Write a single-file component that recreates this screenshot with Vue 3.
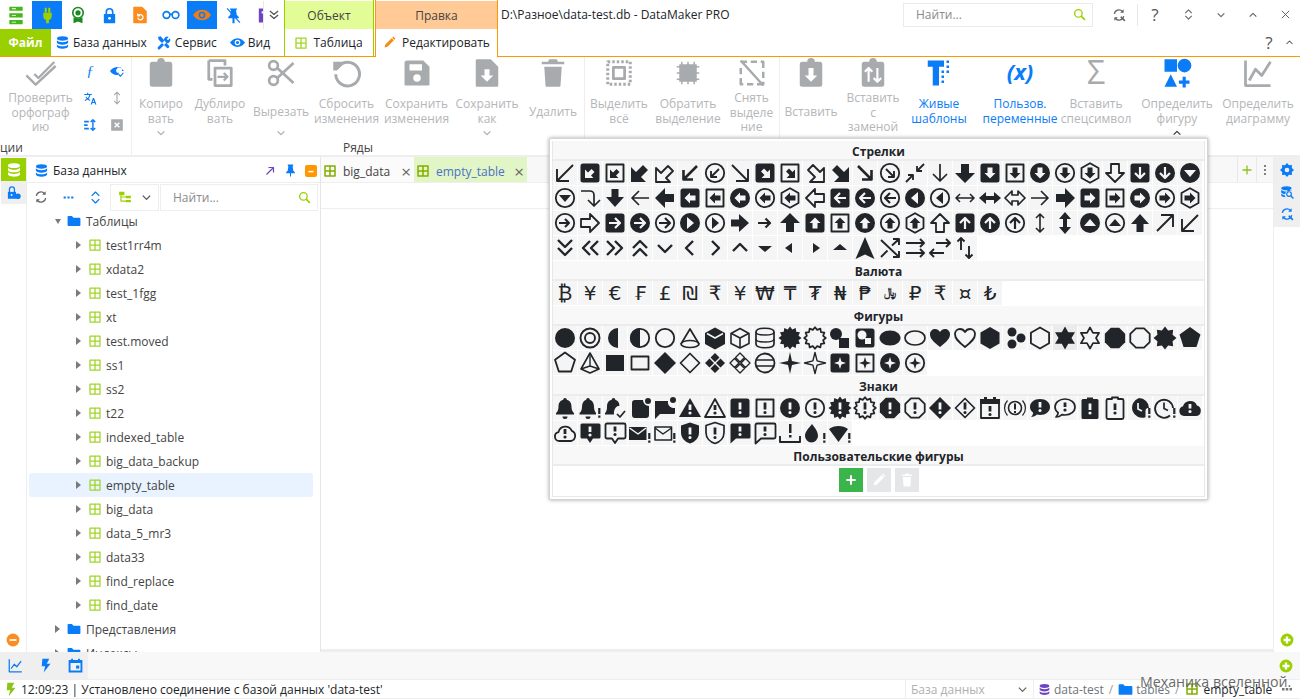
<script setup>
import { h } from 'vue'

const dark = '#212529'
const hole = '#f5f5f5'
const F = (d, f = dark) => ({ d, f })
const S = (d, w = 2, s = dark) => ({ d, s, w })
const rot = (parts, deg) => parts.map((p) => ({ ...p, r: deg }))
const c = (x, y, r) => `M${x - r} ${y}a${r} ${r} 0 1 0 ${2 * r} 0a${r} ${r} 0 1 0 ${-2 * r} 0Z`
const poly = (n, R, start = -90, x = 12, y = 12) => {
  let d = ''
  for (let i = 0; i < n; i++) {
    const a = ((start + (360 / n) * i) * Math.PI) / 180
    d += `${i ? 'L' : 'M'}${(x + R * Math.cos(a)).toFixed(2)} ${(y + R * Math.sin(a)).toFixed(2)}`
  }
  return d + 'Z'
}
const star = (n, R, r, start = -90, x = 12, y = 12) => {
  let d = ''
  for (let i = 0; i < n * 2; i++) {
    const a = ((start + (180 / n) * i) * Math.PI) / 180
    const q = i % 2 ? r : R
    d += `${i ? 'L' : 'M'}${(x + q * Math.cos(a)).toFixed(2)} ${(y + q * Math.sin(a)).toFixed(2)}`
  }
  return d + 'Z'
}

// Ico draws a list of paths, the popup and the toolbars all go through it
const Ico = (p) =>
  h(
    'svg',
    { width: p.size || 24, height: p.size || 24, viewBox: '0 0 24 24', style: 'display:block;flex:none' },
    p.parts.map((q) =>
      h('path', {
        d: q.d,
        fill: q.f || 'none',
        stroke: q.s || 'none',
        'stroke-width': q.w || 0,
        'stroke-dasharray': q.da,
        'stroke-linejoin': 'round',
        transform: q.r ? `rotate(${q.r} 12 12)` : undefined,
      }),
    ),
  )
Ico.props = ['parts', 'size']

// frames
const sqF = [F('M5 2.5h14a2.5 2.5 0 0 1 2.5 2.5v14a2.5 2.5 0 0 1-2.5 2.5H5A2.5 2.5 0 0 1 2.5 19V5A2.5 2.5 0 0 1 5 2.5Z')]
const sqO = [S('M3.5 3.5h17v17h-17Z', 1.9)]
const cF = [F(c(12, 12, 10))]
const cO = [S(c(12, 12, 9.2), 1.8)]
const hexO = [S('M12 2.2 20.5 7v10L12 21.8 3.5 17V7Z', 1.8)]

// straight arrows, written pointing up
const thin = (d) => rot([S('M12 21V4M5 11l7-7 7 7', 1.7)], d)
const thick = (d) => rot([F('M12 2 22 12h-6v9H8V12H2Z')], d)
const medium = (d) => rot([F('M12 3 21 13h-5.5v8h-7v-8H3Z')], d)
const hollow = (d) => rot([S('M12 3 21 12h-5v9H8v-9H3Z', 1.8)], d)
const blockIn = (d, f) => rot([F('M12 6.5 17.5 12H14.5v5.5h-5V12H6.5Z', f)], d)
const thinIn = (d, s) => rot([S('M12 18V7M7 12l5-5 5 5', 2.2, s)], d)
const caretIn = (d, f) => rot([F('M12 8 18 15H6Z', f)], d)

const dirSet = (d) => ({
  thin: thin(d),
  thick: thick(d),
  sqFb: [...sqF, ...blockIn(d, hole)],
  sqOb: [...sqO, ...blockIn(d, dark)],
  cFb: [...cF, ...blockIn(d, hole)],
  cOb: [...cO, ...blockIn(d, dark)],
  hexb: [...hexO, ...blockIn(d, dark)],
  hollow: hollow(d),
  sqFt: [...sqF, ...thinIn(d, hole)],
  cFt: [...cF, ...thinIn(d, hole)],
  cOt: [...cO, ...thinIn(d, dark)],
  cFc: [...cF, ...caretIn(d, hole)],
  cOc: [...cO, ...caretIn(d, dark)],
})
const up = dirSet(0)
const right = dirSet(90)
const down = dirSet(180)
const left = dirSet(270)
const small = rot([S('M12 19V7M7.5 11.5 12 7l4.5 4.5', 2.2)], 90)

// diagonals, written pointing up-right
const dThin = (d) => rot([S('M4 20 20 4M8 4h12v12', 1.9)], d)
const dThick = (d) => rot([F('M6 3h15v15l-5-5-7 7-5-5 7-7Z')], d)
const dHollow = (d) => rot([S('M7 3h14v14l-5-5-7 7-5-5 7-7Z', 1.8)], d)
const dMed = (d) => rot([S('M5 19 18 6M9 5.5h9.5V15', 2.6)], d)
const dIn = (d, f) => rot([F('M8.5 7H17v8.5l-3-3-3.5 3.5-3-3L11 9.5Z', f)], d)
const dCirc = (d) => [...cO, ...rot([S('M8 16 16 8M10 8h6v6', 1.9)], d)]

const lrThin = [S('M3 12h18M7 8l-4 4 4 4M17 8l4 4-4 4', 1.6)]
const lrThick = [F('M1 12 8 6v4h8V6l7 6-7 6v-4H8v4Z')]
const lrHollow = [S('M2 12 9 5v4h6V5l7 7-7 7v-4H9v4Z', 1.7)]
const udThin = rot(lrThin, 90)
const udThick = rot(lrThick, 90)

const chev = (d) => rot([S('M5 9l7 7 7-7', 2.4)], d)
const chev2 = (d) => rot([S('M5 4l7 7 7-7M5 12l7 7 7-7', 2.4)], d)
const caretS = (d) => rot([F('M12 16 5 10h14Z')], d)
const caretN = (d) => rot([F('M12 17 7 10h10Z')], d)

const arrows = [
  dThin(180), [...sqF, ...dIn(180, hole)], [...sqO, ...dIn(180, dark)], dThick(180), dHollow(180), dMed(180), dCirc(180),
  dThin(90), [...sqF, ...dIn(90, hole)], [...sqO, ...dIn(90, dark)], dHollow(90), dThick(90), dMed(90), dCirc(90),
  [S('M14 10l7-7M14 5v5h5M10 14l-7 7M10 19v-5H5', 1.8)],
  down.thin, down.thick, down.sqFb, down.sqOb, down.cFb, down.cOb, down.hexb, down.hollow, down.sqFt, down.cFt, down.cFc,

  down.cOc, [S('M3 5h9a4 4 0 0 1 4 4v11M10 14l6 6 6-6', 1.7)], medium(180),
  left.thin, left.thick, left.sqFb, left.sqOb, left.cFb, left.cOb, left.hexb, left.hollow, left.sqFt, left.cFt, left.cOt, left.cFc, left.cOc,
  lrThin, lrThick, lrHollow,
  right.thin, right.thick, right.sqFb, right.sqOb, right.cFb, right.cOb, right.hexb,

  [...cO, ...rot([S('M12 18V8M8 12l4-4 4 4', 2.1)], 90)], right.hollow, right.sqFt, right.cFt, right.cOt, right.cFc, right.cOc, medium(90), small,
  up.thick, up.sqFb, up.sqOb, up.cFb, up.cOb, up.hexb, up.hollow, up.sqFt, up.cFt, up.cOt,
  udThin, udThick, up.cFc, up.cOc, medium(0), dThin(0), dThin(180),

  chev2(0), chev2(90), chev2(270), chev2(180), chev(0), chev(90), chev(270), chev(180),
  caretS(0), caretN(90), caretN(270), caretS(180),
  [F('M12 1 21.5 23 12 18.5 2.5 23Z')],
  [S('M3 4 21 21M3 21l6.5-6.5M14 9.5 21 3M15 3h6v6M15 21h6v-6', 1.9)],
  [S('M3 7h18M17 3l4 4-4 4M3 17h18M17 13l4 4-4 4', 1.9)],
  [S('M8 7h14M18 3l4 4-4 4M16 17H2M6 13l-4 4 4 4', 1.9)],
  [S('M8 14V2M4.5 5.5 8 2l3.5 3.5M16 10v12M12.5 18.5 16 22l3.5-3.5', 1.9)],
]

const currency = ['₿', '¥', '€', '₣', '£', '₪', '₹', '¥', '₩', '₸', '₮', '₦', '₱', '﷼', '₽', '₹', '¤', '₺']

const spark = (R = 10, r = 2.6) => star(4, R, r)
const heart = 'M12 21C5 15.5 2 12.5 2 8.3 2 5 4.5 3 7 3c2 0 3.8 1 5 3 1.2-2 3-3 5-3 2.5 0 5 2 5 5.3 0 4.2-3 7.2-10 12.7Z'
const dia4 = 'M12 2 16.5 6.5 12 11 7.5 6.5ZM12 13 16.5 17.5 12 22 7.5 17.5ZM6.5 7.5 11 12 6.5 16.5 2 12ZM17.5 7.5 22 12 17.5 16.5 13 12Z'

const shapes = [
  cF, [S(c(12, 12, 9.5), 1.9), S(c(12, 12, 5), 1.9)], [F('M15 2a10 10 0 0 0 0 20Z')], [...cO, F('M12 2a10 10 0 0 0 0 20Z')], cO,
  [S('M12 3 3 18a9 3.5 0 0 0 18 0Z', 1.7), S('M3 18a9 3.5 0 0 1 18 0', 1.3)],
  [F('M12 1.5 22 7v11l-10 5.5L2 18V7Z'), S('M4 7.5 12 12l8-4.5', 1.5, hole)],
  [S('M12 2.5 21 7.5v10L12 22l-9-4.5v-10Z', 1.6), S('M3.5 7.5 12 12l8.5-4.5M12 12v10', 1.6)],
  [S('M3 6c0-5 18-5 18 0v12c0 5-18 5-18 0Z', 1.7), S('M3 6c0 4 18 4 18 0M3 13c0 4 18 4 18 0', 1.4)],
  [F(star(12, 11.5, 8.8))], [S(star(12, 10.8, 8.4), 1.7)],
  [F(c(8, 8, 6)), F('M11 12h10v10H11Z')],
  [...sqF, F(c(9, 9, 4.5), hole), F('M12 12h6v6h-6Z', hole)],
  [F('M12 4.5C6 4.5 1.5 8 1.5 12s4.5 7.5 10.5 7.5S22.5 16 22.5 12 18 4.5 12 4.5Z')],
  [S('M12 5C6 5 2 8 2 12s4 7 10 7 10-3 10-7-4-7-10-7Z', 1.7)],
  [F(heart)], [S(heart, 1.8)],
  [F(poly(6, 11))], [F(c(9, 6, 4.5)), F(c(9, 18, 4.5)), F(c(18, 12, 4.5))], [S(poly(6, 10.5), 1.8)],
  [F(star(6, 11.5, 6.5))], [S(star(6, 10.5, 6), 1.7)],
  [F(poly(8, 11, -67.5))], [S(poly(8, 10.5, -67.5), 1.8)], [F(star(8, 11.5, 8.2))], [F(poly(5, 11))],

  [S(poly(5, 10.5), 1.8)],
  [S('M12 2 3 18l9 4 9-4Z', 1.6), S('M12 2v13M3 18l9-3 9 3', 1.4)],
  [F('M3 4h18v16H3Z')], [S('M3.5 5.5h17v13h-17Z', 1.8)],
  [F('M12 1 23 12 12 23 1 12Z')], [S('M12 2.5 21.5 12 12 21.5 2.5 12Z', 1.7)],
  [F(dia4)], [S(dia4, 1.3)],
  [S(c(12, 12, 9.5), 1.8), S('M3 9h18M3 15h18', 1.6)],
  [F(spark(11, 2.8))], [S(spark(10.5, 3), 1.4)],
  [...sqF, F(spark(6, 2), hole)], [...sqO, F(spark(6, 2))],
  [...cF, F(spark(6, 2), hole)], [...cO, F(spark(6, 2))],
]

const bang = (f, x = 12, t = 6.5, b = 13.5) => F(`M${x - 1.4} ${t}h2.8v${b - t}h-2.8Z${c(x, b + 3, 1.6)}`, f)
const sideBang = F('M20.2 12h2.2v6h-2.2ZM20.2 19.5h2.2v2.2h-2.2Z')
const bell = 'M12 2a1.8 1.8 0 0 1 1.8 1.8c3.5 1 4.7 3.6 4.7 7.2 0 3.5 1.5 5 2.5 6v1.5H3V17c1-1 2.5-2.5 2.5-6 0-3.6 1.2-6.2 4.7-7.2A1.8 1.8 0 0 1 12 2ZM9.5 20.5h5a2.5 2.5 0 0 1-5 0Z'
const bellN = 'M10 2a1.8 1.8 0 0 1 1.8 1.8c3 1 4.2 3.6 4.2 7.2 0 3.5 1.5 5 2 6v1.5H1.5V17c1-1 2.5-2.5 2.5-6 0-3.6 1.2-6.2 4.2-7.2A1.8 1.8 0 0 1 10 2ZM7.5 20.5h5a2.5 2.5 0 0 1-5 0Z'
const clip = 'M9 3V1.5h6V3h4a1.5 1.5 0 0 1 1.5 1.5v17A1.5 1.5 0 0 1 19 23H5a1.5 1.5 0 0 1-1.5-1.5v-17A1.5 1.5 0 0 1 5 3Z'
const cloud = 'M6.5 20a4.5 4.5 0 0 1-1-8.9 7 7 0 0 1 13.3-1.2A5.3 5.3 0 0 1 18 20Z'
const shield = 'M12 1.5 21 4.5v7c0 5.5-4 9.5-9 11-5-1.5-9-5.5-9-11v-7Z'
const msg = 'M4 2.5h17a1.5 1.5 0 0 1 1.5 1.5v12a1.5 1.5 0 0 1-1.5 1.5H8l-5.5 5V4A1.5 1.5 0 0 1 4 2.5Z'
const msgC = 'M4 2.5h17a1.5 1.5 0 0 1 1.5 1.5v12a1.5 1.5 0 0 1-1.5 1.5h-6l-3 4.5-3-4.5H4A1.5 1.5 0 0 1 2.5 16V4A1.5 1.5 0 0 1 4 2.5Z'
const bub = 'M12 3c5.8 0 10 3.5 10 8s-4.2 8-10 8c-1 0-2-.1-3-.4-1.5 1.3-3.5 2.4-6 2.4 1-1 2-2.5 2.2-4.3C3.2 15.3 2 13.3 2 11c0-4.5 4.2-8 10-8Z'

const signs = [
  [F(bell)], [F(bellN), sideBang],
  [F('M10.5 2a1.8 1.8 0 0 1 1.8 1.8c3 1 4 3 4.2 6-3 0-6 3-5.5 8.7H2V17c1-1 2-2.5 2-6 0-3.6 1-6.2 4.7-7.2A1.8 1.8 0 0 1 10.5 2Z'), S('M14 18l3 3 5-6', 1.7)],
  [F('M4 7a3 3 0 0 1 3-3h8a6 6 0 0 0 6 6v9a3 3 0 0 1-3 3H7a3 3 0 0 1-3-3Z'), F(c(20, 5, 3))],
  [F('M2 5h13a6 6 0 0 0 7 7v5a1 1 0 0 1-1 1H7l-5 5Z'), F(c(20, 4, 3))],
  [F('M12 2 23 21H1Z'), bang(hole, 12, 8.5, 14)], [S('M12 3 22 21H2Z', 1.8), bang(dark, 12, 9, 14)],
  [...sqF, bang(hole)], [...sqO, bang(dark)], [...cF, bang(hole)], [...cO, bang(dark)],
  [F(star(12, 11.5, 8.8)), bang(hole)], [S(star(12, 10.8, 8.4), 1.7), bang(dark)],

  [F(poly(8, 11, -67.5)), bang(hole)], [S(poly(8, 10.5, -67.5), 1.8), bang(dark)],
  [F('M12 1 23 12 12 23 1 12Z'), bang(hole)], [S('M12 2.5 21.5 12 12 21.5 2.5 12Z', 1.7), bang(dark)],
  [F('M6 1h3v2h6V1h3v2h4v5H2V3h4Z'), S('M3 6h18v16H3Z', 1.8), bang(dark, 12, 10, 15.5)],
  [S(c(12, 12, 6.5), 1.6), S('M4.5 4.5a11 11 0 0 0 0 15M19.5 4.5a11 11 0 0 1 0 15', 1.2), F('M11 7.5h2v6h-2ZM11 15h2v2h-2Z')],
  [F(bub), bang(hole, 12, 6, 11.5)], [S(bub, 1.7), bang(dark, 12, 6.5, 11)],
  [F(clip), bang(hole, 12, 7.5, 14)], [S(clip, 1.8), bang(dark, 12, 7.5, 14)],
  [F('M11 2a10 10 0 0 1 10 10h-1.5a3 3 0 0 0-2 3v6.3A10 10 0 1 1 11 2Z'), S('M10 7v6l4 2', 1.7, hole), sideBang],
  [S('M17 19.5A9 9 0 1 1 20 12', 1.8), S('M11 6.5v6l4 2', 1.7), sideBang],
  [F('M6 20a5 5 0 0 1-1-9.8 7.5 7.5 0 0 1 14-.8A5.5 5.5 0 0 1 18.5 20Z'), bang(hole, 12, 8, 12.5)],

  [S(cloud, 1.8), bang(dark, 12, 8, 13)],
  [F(msgC), bang(hole, 12, 5.5, 11)], [S(msgC, 1.8), bang(dark, 12, 5.5, 10.5)],
  [F('M1 6h17.5v13H1Z'), S('M1.5 7 10 13l8-6', 1.5, hole), sideBang],
  [S('M2 6h16.5v13H2Z', 1.6), S('M2 7l8 6 8.5-6', 1.5), sideBang],
  [F(shield), bang(hole)], [S(shield, 1.7), bang(dark)],
  [F(msg), bang(hole, 12, 5.5, 10.5)], [S(msg, 1.8), bang(dark, 12, 5.5, 10.5)],
  [S('M2 15v6h20v-6', 1.9), F('M11 3h2.5v9H11ZM11 14h2.5v2.5H11Z')],
  [F('M9 3c3 4 6 7.5 6 12a6.5 6.5 0 0 1-13 0c0-4.5 4-8 7-12Z'), sideBang],
  [F('M1 8c5-4 14-4 19 0l-9.5 13Z'), sideBang],
]

const gridIco = (col, w = 2.5) => [
  { d: 'M2 2h20v20H2Z', s: col, w },
  { d: 'M2 12h20M12 2v20', s: col, w },
]
const db = (col) => [F('M12 2c-5 0-9 1.3-9 3.5S7 9 12 9s9-1.3 9-3.5S17 2 12 2ZM3 8.5c1.5 2 5 3 9 3s7.5-1 9-3V12c0 2-4 3.5-9 3.5S3 14 3 12ZM3 15c1.5 2 5 3 9 3s7.5-1 9-3v3.5c0 2-4 3.5-9 3.5s-9-1.5-9-3.5Z', col)]
const folder = (col) => [F('M1 5a1.5 1.5 0 0 1 1.5-1.5h6l2.5 3h10.5A1.5 1.5 0 0 1 23 8v11a1.5 1.5 0 0 1-1.5 1.5h-19A1.5 1.5 0 0 1 1 19Z', col)]
const plusCircle = (col) => [F(c(12, 12, 11), col), F('M10 6h4v4h4v4h-4v4h-4v-4H6v-4h4Z', '#fff')]

const blue = '#0a7cf7'
const lime = '#9bd000'
const gray = '#a8abae'

const quick = [
  { parts: [F('M8 1h3v7H8ZM13 1h3v7h-3Z', lime), F('M6 8h12v5a6 6 0 0 1-4 5.5V23h-4v-4.5A6 6 0 0 1 6 13Z', lime)], active: true, size: 17 },
  { parts: [S(c(12, 9, 7), 2.2, '#198a1e'), F(c(12, 9, 3.5), '#198a1e'), F('M6 15v8l6-2.5 6 2.5v-8c-3.5 2-8.5 2-12 0Z', '#198a1e')], size: 18 },
  { parts: [F('M4 10h16v12a1 1 0 0 1-1 1H5a1 1 0 0 1-1-1Z', blue), S('M7.5 10V7a4.5 4.5 0 0 1 9 0v3', 2.3, blue), F(c(12, 16, 2), '#fff')], size: 17 },
  { parts: [F('M4 1h11l6 6v15a1 1 0 0 1-1 1H4a1 1 0 0 1-1-1V2a1 1 0 0 1 1-1Z', '#fb8c1e'), S('M9 15.5a3.5 3.5 0 1 0 1-3M9 10v3h3', 1.7, '#fff')], size: 18 },
  { parts: [S(c(6, 12, 4.5), 2.2, blue), S(c(18, 12, 4.5), 2.2, blue), S('M10.5 11h3', 2.2, blue)], size: 18 },
  { parts: [F('M12 5C6 5 2 9 0 12c2 3 6 7 12 7s10-4 12-7c-2-3-6-7-12-7Z', '#ee7d12'), F(c(12, 12, 4.5), blue), F(c(12, 12, 2.5), '#ee7d12')], active: true, size: 18 },
  { parts: [F('M7 2h10v2h-1.5l1 7 3 3v2h-6v7h-3v-7h-6v-2l3-3 1-7H7Z', blue), S('M3 2 21 22', 1.8, blue)], size: 17 },
  { parts: [F('M4 2h14v7h-5v13H4Z', '#6f42c1'), F('M8 6h6v3H8Z', '#fff')], size: 17 },
]

const rbn = {
  check: [S('M1 13l7 7L23 6', 1.8, gray), S('M7 12l3 3L22 3', 1.8, gray)],
  clipboard: [F('M9 3a3 3 0 0 1 6 0h4a2 2 0 0 1 2 2v16a2 2 0 0 1-2 2H5a2 2 0 0 1-2-2V5a2 2 0 0 1 2-2Z', gray)],
  dup: [S('M3 2h13v4M8 8h13v14H8ZM3 2v15h3', 2.2, gray), S('M10 15h8M15 12l3 3-3 3', 1.8, gray)],
  cut: [S(c(6, 6, 3.5), 2.2, gray), S(c(6, 18, 3.5), 2.2, gray), S('M9 8 22 20M9 16 22 4', 2.2, gray)],
  undo: [S('M5 7A9.5 9.5 0 1 1 3 13', 2.4, gray), F('M1 3h8v2L4 10H1Z', gray)],
  save: [F('M4 2h13l5 5v14a1 1 0 0 1-1 1H3a1 1 0 0 1-1-1V4a2 2 0 0 1 2-2Z', gray), F('M6 5h10v5H6Z', '#fff'), F(c(12, 16, 3), '#fff')],
  saveas: [F('M4 1h11l6 6v15a1 1 0 0 1-1 1H4a1 1 0 0 1-1-1V2a1 1 0 0 1 1-1Z', gray), F('M10 9h4v5h3l-5 5-5-5h3Z', '#fff')],
  trash: [F('M9 1h6l1 2h5v2H3V3h5ZM5 7h14l-1 15a1 1 0 0 1-1 1H7a1 1 0 0 1-1-1Z', gray)],
  selall: [{ d: 'M3 3h18v18H3Z', s: gray, w: 2.4, da: '2 1.6' }, S('M7.5 7.5h9v9h-9Z', 2.2, gray)],
  invert: [F('M5 5h14v14H5Z', gray), S('M3 7h18M3 12h18M3 17h18M7 3v18M12 3v18M17 3v18', 1.2, gray)],
  unsel: [S('M3 3h5M11 3h5M19 3h2v5M21 11v5M21 19v2h-5M13 21H8M5 21H3v-5M3 13V8', 2, gray), S('M3 2 21 22', 2, gray)],
  paste: [F('M9 3a3 3 0 0 1 6 0h4a2 2 0 0 1 2 2v16a2 2 0 0 1-2 2H5a2 2 0 0 1-2-2V5a2 2 0 0 1 2-2Z', gray), F('M10 8h4v6h3l-5 5-5-5h3Z', '#fff')],
  pastex: [F('M9 3a3 3 0 0 1 6 0h4a2 2 0 0 1 2 2v16a2 2 0 0 1-2 2H5a2 2 0 0 1-2-2V5a2 2 0 0 1 2-2Z', gray), S('M8.5 19V8M5.5 11l3-3 3 3M15.5 8v11M12.5 16l3 3 3-3', 1.7, '#fff')],
  tpl: [F('M3 2h13v5h-4v15H7V7H3Z', blue), F('M18 2h2v2h-2ZM18 6h2v2h-2ZM14 10h2v2h-2ZM14 14h2v2h-2ZM14 18h2v2h-2ZM18 10h2v2h-2Z', blue)],
  shapes: [F('M2 1h10v10H2Z', blue), F(c(18, 6, 5.5), blue), F('M7 13l5 10H2Z', blue), F('M16.5 15h2.5v3h3v2.5h-3v3h-2.5v-3h-3V18h3Z', blue)],
  chart: [S('M2 2v20h20', 2.2, gray), S('M5 18 10 9l5 5 7-11', 2.2, gray)],
}

const smallTools = [
  { t: 'ƒ' },
  { parts: [F('M12 5C6 5 2 9 0 12c2 3 6 7 12 7 1 0 2-.1 3-.4-.5-1.5 0-3 1-4.1a3 3 0 1 1-3.8-6.4L12 8a4 4 0 0 1 8 4h4c-2-3-6-7-12-7Z', blue), S('M15 18l3 3 5-6', 2, blue)] },
  { parts: [S('M2 6h13M8 3v3M12 6c-1 5-5 9-9 10M5 10c1 3 4 5 7 6', 2, blue), F('M13 23l4-11h2l4 11h-2.2l-.8-2.5h-4l-.8 2.5ZM16.5 19h2.5l-1.2-3.5Z', blue)] },
  { parts: [S('M12 2v20M7 7l5-5 5 5M7 17l5 5 5-5', 2, gray)] },
  { parts: [S('M2 6h8M2 12h6M2 18h8', 3, blue), S('M17 3v18M13 7l4-4 4 4M13 17l4 4 4-4', 2.4, blue)] },
  { parts: [F('M3 2h18a1 1 0 0 1 1 1v18a1 1 0 0 1-1 1H3a1 1 0 0 1-1-1V3a1 1 0 0 1 1-1Z', gray), S('M8 8l8 8M16 8l-8 8', 2.4, '#fff')] },
]
const rowsTools = [
  { w: 58, icon: rbn.clipboard, label: ['Копиро', 'вать'], more: true },
  { w: 60, icon: rbn.dup, label: ['Дублиро', 'вать'] },
  { w: 62, icon: rbn.cut, label: ['Вырезать'], more: true },
  { w: 69, icon: rbn.undo, label: ['Сбросить', 'изменения'] },
  { w: 71, icon: rbn.save, label: ['Сохранить', 'изменения'] },
  { w: 70, icon: rbn.saveas, label: ['Сохранить', 'как'], more: true },
  { w: 62, icon: rbn.trash, label: ['Удалить'] },
]
const selTools = [
  { w: 68, icon: rbn.selall, label: ['Выделить', 'всё'] },
  { w: 70, icon: rbn.invert, label: ['Обратить', 'выделение'] },
  { w: 57, icon: rbn.unsel, label: ['Снять', 'выделе', 'ние'] },
]
const pasteTools = [
  { w: 62, icon: rbn.paste, label: ['Вставить'] },
  { w: 62, icon: rbn.pastex, label: ['Вставить', 'с', 'заменой'] },
  { w: 70, icon: rbn.tpl, label: ['Живые', 'шаблоны'], on: true },
  { w: 92, text: '(x)', label: ['Пользов.', 'переменные'], on: true },
  { w: 60, text: 'Σ', label: ['Вставить', 'спецсимвол'] },
  { w: 102, icon: rbn.shapes, label: ['Определить', 'фигуру'], opened: true },
  { w: 60, icon: rbn.chart, label: ['Определить', 'диаграмму'] },
]

const tables = [
  'test1rr4m', 'xdata2', 'test_1fgg', 'xt', 'test.moved', 'ss1', 'ss2', 't22', 'indexed_table',
  'big_data_backup', 'empty_table', 'big_data', 'data_5_mr3', 'data33', 'find_replace', 'find_date',
]

const sections = [
  { title: 'Стрелки', items: arrows },
  { title: 'Валюта', glyphs: currency },
  { title: 'Фигуры', items: shapes, hot: 20 },
  { title: 'Знаки', items: signs },
]

const tableIco = gridIco('#a0d524')
const tabIco = gridIco('#84ad00', 3)
const magn = (col) => [S(c(10, 10, 7), 2.4, col), S('M15 15l7 7', 3, col)]
const sync = (col) => [S('M4 10a8 8 0 0 1 14-4M20 14a8 8 0 0 1-14 4', 2.2, col), F('M20 2v6h-6ZM4 22v-6h6Z', col)]
const bolt = (col) => [F('M7 1h11l-4 8h6L9 23l2.5-10H6Z', col)]
const updown = (col) => [S('M5 9l7-7 7 7M5 15l7 7 7-7', 2.4, col)]
const chevD = (col) => [S('M4 8l8 8 8-8', 2.8, col)]
const treeBtn = [F('M2 3h9v6H2ZM13 10h9v4h-9ZM13 17h9v4h-9Z', lime), S('M5 9v10h8M5 12h8', 2, lime)]
const gear = [F(star(8, 12, 9), blue), F(c(12, 12, 4), '#f0f0f0')]
const dbSearch = [F('M11 2c-5 0-9 1.3-9 3.5S6 9 11 9s9-1.3 9-3.5S16 2 11 2ZM2 8c1.5 2 5 3 9 3s7.5-1 9-3v2a7 7 0 0 0-11 6c-3.5-.4-7-1.7-7-4ZM2 15c1 1 3.5 2 6 2.4.3 1.5 1 2.6 2 3.6-4-.2-8-1.5-8-3.5Z', blue), S(c(15.5, 15.5, 4), 2, blue), S('M18.5 18.5 23 23', 2.4, blue)]
const lockDb = [F('M3 11h13v11H3Z', blue), S('M5.5 11V7a4 4 0 0 1 8 0v4', 2, blue), F(c(19, 18, 4.5), blue), F(c(9, 16, 1.6), '#efefef')]
</script>

<template>
  <div class="app">
    <header class="top">
      <div class="top-left">
        <div class="qa-row">
          <div class="logo">
            <Ico :size="20" :parts="[{ d: 'M4 2h16v5H4ZM4 10h16v5H4ZM4 18h16v5H4Z', f: '#46b51a' }, { d: 'M7 4h5v1H7ZM7 12h5v1H7ZM7 20h5v1H7Z', f: '#fff' }]" />
          </div>
          <div class="qa-list">
            <div v-for="(q, i) in quick" :key="i" class="qa" :class="{ 'qa-on': q.active }">
              <Ico :parts="q.parts" :size="q.size" />
            </div>
          </div>
          <div class="qa-more">
            <Ico :parts="[{ d: 'M5 5l7 6 7-6M5 12l7 6 7-6', s: '#555', w: 2.2 }]" :size="14" />
          </div>
        </div>
        <nav class="menu-row">
          <span class="file-tab">Файл</span>
          <span class="menu-tab"><Ico :parts="db(blue)" :size="15" />База данных</span>
          <span class="menu-tab tight">
            <Ico :parts="[{ d: 'M3 3l4-1 13 15a3 3 0 0 1-3 3L4 7ZM21 5l-3 3-2-2 3-3a5 5 0 0 0-7 6L3 18a2 2 0 0 0 3 3l9-9a5 5 0 0 0 6-7Z', f: blue }]" :size="16" />Сервис
          </span>
          <span class="menu-tab"><Ico :parts="[F('M12 5C6 5 2 9 0 12c2 3 6 7 12 7s10-4 12-7c-2-3-6-7-12-7Z', blue), F(c(12, 12, 4.5), '#fff'), F(c(12, 12, 2.5), blue)]" :size="15" />Вид</span>
        </nav>
      </div>

      <div class="ctx ctx-obj">
        <div class="ctx-head">Объект</div>
        <div class="ctx-tab"><Ico :parts="tableIco" :size="12" />Таблица</div>
      </div>
      <div class="ctx ctx-edit">
        <div class="ctx-head">Правка</div>
        <div class="ctx-tab">
          <Ico :parts="[{ d: 'M3 21l1-5L16 4l4 4L8 20ZM17 3l2-2 4 4-2 2Z', f: '#f58a0b' }]" :size="13" />Редактировать
        </div>
      </div>

      <div class="top-right">
        <div class="title-row">
          <span class="doc-title">D:\Разное\data-test.db - DataMaker PRO</span>
          <label class="global-find">
            <span>Найти...</span>
            <Ico :parts="magn(lime)" :size="13" />
          </label>
          <Ico class="find-extra" :parts="[...sync('#666'), ...magn('#666').slice(1)]" :size="14" />
          <span class="vbar"></span>
          <span class="win-btn help">?</span>
          <Ico class="win-ico" :parts="updown('#666')" :size="11" />
          <Ico class="win-ico" :parts="chevD('#666')" :size="10" />
          <Ico class="win-ico" :parts="[{ ...chevD('#666')[0], r: 180 }]" :size="10" />
          <Ico class="win-ico" :parts="[{ d: 'M4 4l16 16M20 4 4 20', s: '#555', w: 2 }]" :size="11" />
        </div>
        <div class="help-row">
          <span class="win-btn help">?</span>
          <Ico :parts="[{ ...chevD('#555')[0], r: 180 }]" :size="9" />
        </div>
      </div>
    </header>

    <section class="ribbon">
      <div class="rgroup g-spell">
        <div class="rtools">
          <div class="rbtn" style="width: 81px">
            <Ico :parts="rbn.check" :size="32" />
            <div class="rlabel spell"><span>Проверить</span><span>орфограф</span><span>ию</span></div>
          </div>
          <div class="rsmall">
            <template v-for="(s, i) in smallTools" :key="i">
              <span v-if="s.t" class="fx">{{ s.t }}</span>
              <Ico v-else :parts="s.parts" :size="14" />
            </template>
          </div>
        </div>
        <div class="gname gname-left">ции</div>
      </div>

      <div class="rgroup g-rows">
        <div class="rtools">
          <div v-for="b in rowsTools" :key="b.label[0] + b.w" class="rbtn" :style="{ width: b.w + 'px' }">
            <Ico :parts="b.icon" :size="30" />
            <div class="rlabel" :class="{ mid: b.label.length === 1 }"><span v-for="l in b.label" :key="l">{{ l }}</span></div>
            <Ico v-if="b.more" class="rmore" :parts="chevD('#aaa')" :size="10" />
          </div>
        </div>
        <div class="gname">Ряды</div>
      </div>

      <div class="rgroup g-sel">
        <div class="rtools">
          <div v-for="b in selTools" :key="b.label[0]" class="rbtn" :style="{ width: b.w + 'px' }">
            <Ico :parts="b.icon" :size="30" />
            <div class="rlabel" :class="{ tall: b.label.length === 3 }"><span v-for="l in b.label" :key="l">{{ l }}</span></div>
          </div>
        </div>
      </div>

      <div class="rgroup g-paste">
        <div class="rtools">
          <div v-for="b in pasteTools" :key="b.label.join()" class="rbtn" :class="{ on: b.on }" :style="{ width: b.w + 'px' }">
            <Ico v-if="b.icon" :parts="b.icon" :size="30" />
            <div v-else class="rtext" :class="{ sigma: b.text === 'Σ' }">{{ b.text }}</div>
            <div class="rlabel" :class="{ tall: b.label.length === 3, mid: b.label.length === 1 }"><span v-for="l in b.label" :key="l">{{ l }}</span></div>
            <Ico v-if="b.opened" class="rmore" :parts="[{ ...chevD('#333')[0], r: 180 }]" :size="10" />
          </div>
        </div>
      </div>
    </section>

    <main class="work">
      <aside class="rail">
        <div class="rail-btn rail-on"><Ico :parts="db('#fff')" :size="16" /></div>
        <div class="rail-btn rail-alt"><Ico :parts="lockDb" :size="15" /></div>
        <div class="rail-end"><Ico :parts="[F(c(12, 12, 11), '#fb8c1e'), F('M6 10.5h12v3H6Z', '#fff')]" :size="14" /></div>
      </aside>

      <div class="db-panel">
        <div class="panel-head">
          <Ico :parts="db(blue)" :size="15" />
          <span class="panel-title">База данных</span>
          <Ico class="p-a" :parts="[{ d: 'M5 19 19 5M9 5h10v10', s: '#6f42c1', w: 2.4 }]" :size="12" />
          <Ico class="p-b" :parts="[F('M7 1h10v2l-1 1 1 8 3 3v2h-7v6h-2v-6H4v-2l3-3 1-8-1-1Z', blue)]" :size="13" />
          <span class="p-c">–</span>
        </div>
        <div class="panel-tools">
          <Ico class="t1" :parts="sync('#666')" :size="14" />
          <Ico class="t2" :parts="[F('M3 10h4v4H3ZM10 10h4v4h-4ZM17 10h4v4h-4Z', blue)]" :size="13" />
          <Ico class="t3" :parts="updown(blue)" :size="13" />
          <div class="tree-mode">
            <Ico :parts="treeBtn" :size="14" />
            <Ico :parts="chevD('#555')" :size="11" />
          </div>
          <label class="tree-find">
            <span>Найти...</span>
            <Ico :parts="magn(lime)" :size="13" />
          </label>
        </div>
        <ul class="tree">
          <li class="node lvl1"><i class="caret open"></i><Ico :parts="folder(blue)" :size="14" /><span>Таблицы</span></li>
          <li v-for="t in tables" :key="t" class="node lvl2" :class="{ picked: t === 'empty_table' }">
            <i class="caret"></i><Ico :parts="tableIco" :size="12" /><span>{{ t }}</span>
          </li>
          <li class="node lvl1"><i class="caret"></i><Ico :parts="folder(blue)" :size="14" /><span>Представления</span></li>
          <li class="node lvl1"><i class="caret"></i><Ico :parts="folder(blue)" :size="14" /><span>Индексы</span></li>
        </ul>
      </div>

      <div class="docs">
        <div class="tabs">
          <div class="tab">
            <Ico :parts="tabIco" :size="12" /><span>big_data</span><b class="x">×</b>
          </div>
          <div class="tab tab-on">
            <Ico :parts="tabIco" :size="12" /><span>empty_table</span><b class="x">×</b>
          </div>
          <div class="tabs-fill"></div>
          <div class="tab-tool t-add"><Ico :parts="[{ d: 'M12 3v18M3 12h18', s: '#8cc21a', w: 2.6 }]" :size="12" /></div>
          <div class="tab-tool"><Ico :parts="[F(c(12, 4, 2.2), '#666'), F(c(12, 12, 2.2), '#666'), F(c(12, 20, 2.2), '#666')]" :size="12" /></div>
        </div>
        <div class="doc-bar"></div>
        <div class="doc-body"></div>
      </div>

      <aside class="rail-right">
        <div class="rr-top">
          <Ico :parts="gear" :size="14" />
          <Ico :parts="dbSearch" :size="14" />
          <Ico :parts="[...sync(blue), ...magn(blue).slice(1)]" :size="14" />
        </div>
        <div class="rr-end"><Ico :parts="plusCircle('#9bd000')" :size="14" /></div>
      </aside>
    </main>

    <section class="dock">
      <div class="dock-tabs">
        <Ico :parts="[S('M2 2v20h20', 2, blue), S('M5 17l5-7 4 4 7-9', 2, blue)]" :size="15" />
        <Ico :parts="bolt(blue)" :size="15" />
        <Ico :parts="[F('M5 1h3v2h8V1h3v2h4v20H1V3h4Z', blue), F('M4 8h16v12H4Z', '#f3f3f3'), F('M13 12h5v5h-5Z', blue)]" :size="15" />
      </div>
      <Ico class="dock-plus" :parts="plusCircle('#9bd000')" :size="14" />
    </section>

    <footer class="status">
      <Ico class="st-bolt" :parts="bolt('#8cc21a')" :size="15" />
      <span class="st-msg">12:09:23 | Установлено соединение с базой данных 'data-test'</span>
      <div class="st-combo">
        <span>База данных</span>
        <Ico :parts="chevD('#666')" :size="11" />
      </div>
      <div class="crumbs">
        <Ico :parts="db('#6f42c1')" :size="13" /><span class="c-mute">data-test</span><em>/</em>
        <Ico :parts="folder(blue)" :size="15" /><span class="c-mute">tables</span><em>/</em>
        <Ico class="c-tbl" :parts="tabIco" :size="12" /><span class="c-last">empty_table</span>
        <Ico class="c-dots" :parts="[F('M2 10h5v5H2ZM9.5 10h5v5h-5ZM17 10h5v5h-5Z', '#777')]" :size="12" />
      </div>
    </footer>

    <div class="watermark">Механика вселенной.</div>

    <div class="shape-popup">
      <div class="pop-inner">
        <template v-for="sec in sections" :key="sec.title">
          <div class="pop-title">{{ sec.title }}</div>
          <div class="pop-grid">
            <template v-if="sec.items">
              <div v-for="(it, i) in sec.items" :key="i" class="cell" :class="{ hot: sec.hot === i }">
                <Ico :parts="it" :size="24" />
              </div>
            </template>
            <template v-else>
              <div v-for="(g, i) in sec.glyphs" :key="i" class="cell glyph" :class="{ rial: g === '﷼' }">{{ g }}</div>
            </template>
          </div>
        </template>
        <div class="pop-title">Пользовательские фигуры</div>
        <div class="pop-actions">
          <span class="pa pa-add"><Ico :parts="[{ d: 'M12 4v16M4 12h16', s: '#fff', w: 3.4 }]" :size="14" /></span>
          <span class="pa"><Ico :parts="[{ d: 'M3 21l1-5L16 4l4 4L8 20ZM17 3l2-2 4 4-2 2Z', f: '#fff' }]" :size="14" /></span>
          <span class="pa"><Ico :parts="[F('M9 1h6l1 2h5v2H3V3h5ZM5 7h14l-1 15a1 1 0 0 1-1 1H7a1 1 0 0 1-1-1Z', '#fff')]" :size="14" /></span>
        </div>
      </div>
    </div>
  </div>
</template>

<style>
html,
body {
  margin: 0;
  background: #fff;
}
</style>

<style scoped>
.app {
  position: relative;
  width: 1300px;
  height: 700px;
  overflow: hidden;
  display: flex;
  flex-direction: column;
  background: #fff;
  color: #212529;
  font-family: 'Open Sans', 'Noto Sans', sans-serif;
  font-size: 12px;
}

/* title + tabs */
.top {
  height: 56px;
  flex: none;
  display: flex;
  border-bottom: 1px solid #ff9800;
  box-sizing: content-box;
}
.top-left {
  width: 284px;
  flex: none;
  padding-top: 1px;
  box-sizing: border-box;
}
.qa-row {
  height: 28px;
  display: flex;
}
.logo {
  width: 32px;
  display: flex;
  align-items: center;
  justify-content: center;
}
.qa-list {
  display: flex;
  width: 232px;
  overflow: hidden;
  border-right: 1px solid #e8e8e8;
  box-sizing: border-box;
}
.qa {
  width: 30px;
  margin-right: 1px;
  flex: none;
  display: flex;
  align-items: center;
  justify-content: center;
}
.qa-on {
  background: #0a7cf7;
}
.qa-more {
  flex: 1;
  display: flex;
  align-items: center;
  justify-content: center;
}
.menu-row {
  height: 27px;
  display: flex;
  align-items: stretch;
}
.file-tab {
  width: 51px;
  background: #9bd000;
  color: #fff;
  font-weight: 700;
  display: flex;
  align-items: center;
  justify-content: center;
}
.menu-tab {
  display: flex;
  align-items: center;
  gap: 3px;
  padding: 0 4px;
  white-space: nowrap;
}
.menu-tab.tight {
  margin-left: 1px;
  padding: 0 9px 0 4px;
}
.ctx {
  flex: none;
  box-sizing: border-box;
  padding-top: 1px;
}
.ctx-head {
  height: 28px;
  display: flex;
  align-items: center;
  justify-content: center;
  color: #444;
}
.ctx-tab {
  height: 27px;
  display: flex;
  align-items: center;
  justify-content: center;
  gap: 6px;
}
.ctx-obj {
  width: 90px;
  border-left: 1px solid #9bd000;
  border-right: 1px solid #9bd000;
}
.ctx-obj .ctx-head {
  background: #e2fc97;
}
.ctx-edit {
  width: 123px;
  margin-left: 1px;
  height: 57px;
  position: relative;
  z-index: 1;
  background: #fff;
  border-left: 1px solid #ff9800;
  border-right: 1px solid #ff9800;
}
.ctx-edit .ctx-head {
  background: #ffca96;
}
.top-right {
  flex: 1;
  min-width: 0;
  display: flex;
  flex-direction: column;
}
.title-row {
  height: 29px;
  display: flex;
  align-items: center;
  padding-left: 3px;
}
.doc-title {
  width: 402px;
  margin-top: -1px;
  white-space: nowrap;
  flex: none;
}
.global-find {
  width: 190px;
  height: 24px;
  flex: none;
  border: 1px solid #eaeaea;
  box-sizing: border-box;
  display: flex;
  align-items: center;
  justify-content: space-between;
  padding: 0 6px 0 12px;
  color: #8a8a8a;
}
.find-extra {
  margin-left: 19px;
}
.vbar {
  width: 1px;
  height: 22px;
  background: #e8e8e8;
  margin: 0 11px;
}
.win-btn.help {
  font-size: 17px;
  color: #555;
  line-height: 1;
  width: 12px;
  text-align: center;
}
.win-ico {
  margin-left: 22px;
}
.help-row {
  flex: 1;
  display: flex;
  align-items: center;
  justify-content: flex-end;
  gap: 10px;
  padding-right: 6px;
}

/* ribbon */
.ribbon {
  height: 100px;
  flex: none;
  display: flex;
  border-bottom: 2px solid #eeeeee;
  box-sizing: border-box;
}
.rgroup {
  position: relative;
  flex: none;
  border-right: 1px solid #eeeeee;
  box-sizing: border-box;
}
.g-spell {
  width: 132px;
}
.g-rows {
  width: 453px;
}
.g-sel {
  width: 195px;
}
.g-paste {
  flex: 1;
  border-right: 0;
}
.rtools {
  display: flex;
  height: 84px;
}
.rbtn {
  flex: none;
  display: flex;
  flex-direction: column;
  align-items: center;
  padding-top: 1px;
  position: relative;
  color: #b4b6b8;
}
.rbtn.on {
  color: #0a7cf7;
}
.rlabel {
  display: flex;
  flex-direction: column;
  align-items: center;
  line-height: 14.5px;
  margin-top: 9px;
  white-space: nowrap;
}
.rlabel.mid {
  margin-top: 17px;
}
.rlabel.tall {
  margin-top: 3px;
}
.rlabel.spell {
  margin-top: 1px;
}
.rmore {
  position: absolute;
  bottom: 3px;
}
.rtext {
  height: 30px;
  font-size: 22px;
  font-weight: 700;
  font-style: italic;
  color: #0a7cf7;
  line-height: 26px;
}
.rtext.sigma {
  font-style: normal;
  font-weight: 400;
  font-size: 32px;
  color: #a8abae;
  line-height: 28px;
}
.rsmall {
  width: 50px;
  margin-left: -3px;
  padding: 7px 0 0;
  display: grid;
  grid-template-columns: 24px 30px;
  grid-auto-rows: 27px;
  justify-items: center;
  align-items: start;
}
.fx {
  font-family: 'Liberation Serif', serif;
  font-style: italic;
  font-size: 15px;
  line-height: 14px;
  color: #0a7cf7;
}
.gname {
  text-align: center;
  color: #444;
  line-height: 14px;
}
.gname-left {
  text-align: left;
}

/* main */
.work {
  flex: 1;
  min-height: 0;
  display: flex;
}
.rail {
  width: 27px;
  flex: none;
  display: flex;
  flex-direction: column;
  padding-top: 1px;
  border-right: 1px solid #eeeeee;
  box-sizing: border-box;
}
.rail-btn {
  height: 23px;
  margin-left: 1px;
  display: flex;
  align-items: center;
  justify-content: center;
}
.rail-on {
  background: #9bd000;
}
.rail-alt {
  background: #efefef;
}
.rail-end {
  margin-top: auto;
  margin-bottom: 5px;
  display: flex;
  justify-content: center;
}
.db-panel {
  width: 294px;
  flex: none;
  border-right: 1px solid #e6e6e6;
  box-sizing: border-box;
  display: flex;
  flex-direction: column;
  overflow: hidden;
}
.panel-head {
  height: 26px;
  flex: none;
  display: flex;
  align-items: center;
  border-bottom: 1px solid #eeeeee;
  box-sizing: border-box;
  padding: 2px 0 0 7px;
}
.panel-title {
  margin-left: 4px;
  flex: 1;
}
.p-a {
  margin-right: 8px;
}
.p-b {
  margin-right: 8px;
}
.p-c {
  width: 12px;
  height: 12px;
  border-radius: 2px;
  background: #ff9800;
  color: #fff;
  font-weight: 700;
  line-height: 11px;
  text-align: center;
  margin-right: 3px;
}
.panel-tools {
  height: 28px;
  flex: none;
  display: flex;
  align-items: center;
  padding-left: 7px;
}
.t2 {
  margin-left: 14px;
}
.t3 {
  margin-left: 14px;
}
.tree-mode {
  width: 49px;
  height: 27px;
  margin-left: 8px;
  border: 1px solid #eeeeee;
  box-sizing: border-box;
  display: flex;
  align-items: center;
  justify-content: center;
  gap: 9px;
}
.tree-find {
  width: 158px;
  height: 27px;
  margin-left: 1px;
  border: 1px solid #eeeeee;
  box-sizing: border-box;
  display: flex;
  align-items: center;
  justify-content: space-between;
  padding: 0 6px 0 12px;
  color: #8a8a8a;
}
.tree {
  list-style: none;
  margin: -2px 0 0;
  padding: 0 7px 0 2px;
}
.node {
  height: 24px;
  display: flex;
  align-items: center;
  white-space: nowrap;
  color: #444;
  border-radius: 3px;
}
.node span {
  margin-left: 5px;
}
.lvl1 {
  padding-left: 26px;
}
.lvl1 svg {
  margin-left: 7px;
}
.lvl2 {
  padding-left: 47px;
}
.lvl2 svg {
  margin-left: 8px;
}
.picked {
  background: #e9f3ff;
}
.caret {
  width: 0;
  height: 0;
  flex: none;
  border-left: 5px solid #7a7a7a;
  border-top: 4px solid transparent;
  border-bottom: 4px solid transparent;
}
.caret.open {
  border-top: 5px solid #7a7a7a;
  border-left: 3.5px solid transparent;
  border-right: 3.5px solid transparent;
  border-bottom: 0;
  margin-right: -1px;
}

/* document area */
.docs {
  flex: 1;
  min-width: 0;
  display: flex;
  flex-direction: column;
  border-bottom: 3px solid #eeeeee;
}
.tabs {
  height: 26px;
  flex: none;
  display: flex;
  align-items: stretch;
  background: #f8f8f8;
  border-bottom: 1px solid #eeeeee;
  box-sizing: border-box;
}
.tab {
  width: 93px;
  flex: none;
  display: flex;
  align-items: center;
  padding: 3px 0 0 3px;
  box-sizing: border-box;
  background: #fbfbfb;
  color: #444;
}
.tab span {
  margin-left: 7px;
  flex: 1;
}
.tab-on {
  width: 113px;
  background: #e2f5c6;
  color: #4a72c4;
}
.x {
  font-weight: 400;
  font-size: 17px;
  line-height: 1;
  color: #666;
  margin-right: 3px;
}
.tabs-fill {
  flex: 1;
}
.tab-tool {
  width: 17px;
  flex: none;
  display: flex;
  align-items: center;
  justify-content: center;
  border-left: 1px solid #e8e8e8;
  box-sizing: border-box;
}
.tab-tool.t-add {
  width: 19px;
}
.doc-bar {
  height: 26px;
  flex: none;
  border-bottom: 1px solid #eeeeee;
  box-sizing: border-box;
}
.doc-body {
  flex: 1;
}
.rail-right {
  width: 27px;
  flex: none;
  display: flex;
  flex-direction: column;
  border-left: 1px solid #eeeeee;
  box-sizing: border-box;
}
.rr-top {
  height: 70px;
  background: #efefef;
  display: flex;
  flex-direction: column;
  align-items: center;
  gap: 8px;
  padding-top: 6px;
  box-sizing: border-box;
}
.rr-end {
  margin-top: auto;
  margin-bottom: 5px;
  display: flex;
  justify-content: center;
}

/* bottom */
.dock {
  height: 28px;
  flex: none;
  display: flex;
  justify-content: space-between;
  align-items: center;
  background: #f8f8f8;
  border-bottom: 1px solid #eeeeee;
  box-sizing: border-box;
  padding-right: 7px;
}
.dock-tabs {
  width: 88px;
  height: 100%;
  background: #efefef;
  display: flex;
  align-items: center;
  gap: 15px;
  padding-left: 8px;
  box-sizing: border-box;
}
.status {
  height: 19px;
  flex: none;
  margin-bottom: 1px;
  display: flex;
  align-items: center;
  border-bottom: 1px solid #eeeeee;
  box-sizing: border-box;
}
.st-bolt {
  margin-left: 3px;
}
.st-msg {
  margin-left: 3px;
  width: 884px;
  flex: none;
  white-space: nowrap;
}
.st-combo {
  width: 129px;
  height: 100%;
  flex: none;
  box-sizing: border-box;
  border-left: 1px solid #eeeeee;
  border-right: 1px solid #eeeeee;
  display: flex;
  align-items: center;
  justify-content: space-between;
  padding: 0 5px;
  color: #b0b0b0;
}
.crumbs {
  display: flex;
  align-items: center;
  gap: 3px;
  margin-left: 4px;
  white-space: nowrap;
}
.crumbs em {
  font-style: normal;
  color: #999;
  margin: 0 2px;
}
.c-mute {
  color: #6c757d;
}
.c-last {
  color: #212529;
}
.c-tbl {
  margin-left: 2px;
  margin-right: 2px;
}
.c-dots {
  margin-left: 6px;
}
.watermark {
  position: absolute;
  left: 1140px;
  top: 672px;
  font-size: 14.2px;
  color: #6a6a6a;
  white-space: nowrap;
}

/* shapes popup */
.shape-popup {
  position: absolute;
  left: 549px;
  top: 138px;
  width: 659px;
  height: 362px;
  box-sizing: border-box;
  background: #fff;
  border: 1px solid #d4d4d4;
  box-shadow: 0 0 4px rgba(0, 0, 0, 0.35);
  padding: 2px 2px 0;
}
.pop-inner {
  height: 356px;
  box-sizing: border-box;
  border: 1px solid #e8e8e8;
  border-top: 0;
}
.pop-title {
  height: 20px;
  box-sizing: border-box;
  background: #f8f8f8;
  border-bottom: 2px solid #ececec;
  text-align: center;
  font-weight: 700;
  color: #212529;
  line-height: 21px;
}
.pop-grid {
  display: grid;
  grid-template-columns: repeat(26, 24px);
  grid-auto-rows: 24px;
  gap: 1px;
  margin-bottom: 1px;
}
.cell {
  background: #f5f5f5;
  display: flex;
  align-items: center;
  justify-content: center;
}
.cell.hot {
  background: #ebebeb;
}
.glyph {
  font-family: 'DejaVu Sans', sans-serif;
  font-size: 20px;
  color: #212529;
  line-height: 24px;
}
.glyph.rial {
  font-size: 11px;
  font-weight: 700;
}
.pop-actions {
  display: flex;
  justify-content: center;
  gap: 4px;
  margin-top: 2px;
}
.pa {
  width: 24px;
  height: 24px;
  background: #e5e6e8;
  display: flex;
  align-items: center;
  justify-content: center;
}
.pa-add {
  background: #3bb54a;
}
</style>
